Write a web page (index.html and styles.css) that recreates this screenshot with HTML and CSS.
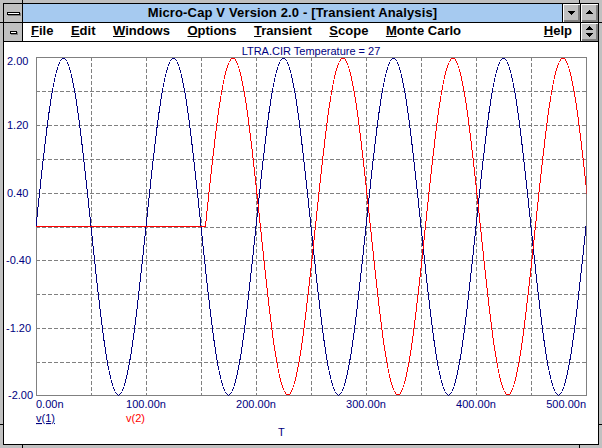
FILE: index.html
```html
<!DOCTYPE html>
<html>
<head>
<meta charset="utf-8">
<title>Micro-Cap V</title>
<link rel="stylesheet" href="styles.css">
</head>
<body>
<div class="window">
  <div class="inner">
    <div class="titlebar">
      <div class="sysbox"><span class="sysbar"></span></div>
      <div class="caption">Micro-Cap V Version 2.0 - [Transient Analysis]</div>
      <div class="btn btn-min"><svg width="7" height="4" viewBox="0 0 7 4"><path d="M0 0H7V1H6V2H5V3H4V4H3V3H2V2H1V1H0Z"/></svg></div>
      <div class="btn btn-max"><svg width="7" height="4" viewBox="0 0 7 4"><path d="M3 0H4V1H5V2H6V3H7V4H0V3H1V2H2V1H3Z"/></svg></div>
    </div>
    <div class="menubar">
      <div class="sysbox"><span class="sysbar sysbar-small"></span></div>
      <ul class="menu">
        <li><u>F</u>ile</li>
        <li><u>E</u>dit</li>
        <li><u>W</u>indows</li>
        <li><u>O</u>ptions</li>
        <li><u>T</u>ransient</li>
        <li><u>S</u>cope</li>
        <li><u>M</u>onte Carlo</li>
        <li class="menu-help"><u>H</u>elp</li>
      </ul>
      <div class="btn btn-max btn-restore"><svg width="7" height="11" viewBox="0 0 7 11"><path d="M3 0H4V1H5V2H6V3H7V4H0V3H1V2H2V1H3Z M0 7H7V8H6V9H5V10H4V11H3V10H2V9H1V8H0Z"/></svg></div>
    </div>
    <div class="client">
      <svg class="chart" width="594" height="402" viewBox="4 42 594 402">
        <defs>
          <clipPath id="plot-clip"><rect x="36" y="40" width="550.5" height="380"/></clipPath>
        </defs>
        <text class="label" x="311" y="55" text-anchor="middle">LTRA.CIR Temperature = 27</text>
        <path class="grid" d="M91.5 57V396M146.5 57V396M201.5 57V396M256.5 57V396M311.5 57V396M366.5 57V396M421.5 57V396M476.5 57V396M531.5 57V396"/>
        <path class="grid" d="M36 91.5H586M36 125.5H586M36 159.5H586M36 193.5H586M36 227.5H586M36 260.5H586M36 294.5H586M36 328.5H586M36 362.5H586"/>
        <rect class="frame" x="36.5" y="57.5" width="550" height="338"/>
        <text class="label" x="7" y="65">2.00</text>
        <text class="label" x="7" y="129">1.20</text>
        <text class="label" x="7" y="197">0.40</text>
        <text class="label" x="6" y="264">-0.40</text>
        <text class="label" x="6" y="332">-1.20</text>
        <text class="label" x="8" y="399">-2.00</text>
        <text class="label" x="36" y="408">0.00n</text>
        <text class="label" x="146" y="408" text-anchor="middle">100.00n</text>
        <text class="label" x="256" y="408" text-anchor="middle">200.00n</text>
        <text class="label" x="366" y="408" text-anchor="middle">300.00n</text>
        <text class="label" x="476" y="408" text-anchor="middle">400.00n</text>
        <text class="label" x="586" y="408" text-anchor="end">500.00n</text>
        <g clip-path="url(#plot-clip)">
          <path class="wave wave-v1" d="M36 226.5c8.97-86.32 17.55-168.5 27.5-168.5c9.95 0 18.53 82.18 27.5 168.5c8.97 86.32 17.55 168.5 27.5 168.5c9.95 0 18.53-82.18 27.5-168.5c8.97-86.32 17.55-168.5 27.5-168.5c9.95 0 18.53 82.18 27.5 168.5c8.97 86.32 17.55 168.5 27.5 168.5c9.95 0 18.53-82.18 27.5-168.5c8.97-86.32 17.55-168.5 27.5-168.5c9.95 0 18.53 82.18 27.5 168.5c8.97 86.32 17.55 168.5 27.5 168.5c9.95 0 18.53-82.18 27.5-168.5c8.97-86.32 17.55-168.5 27.5-168.5c9.95 0 18.53 82.18 27.5 168.5c8.97 86.32 17.55 168.5 27.5 168.5c9.95 0 18.53-82.18 27.5-168.5c8.97-86.32 17.55-168.5 27.5-168.5c9.95 0 18.53 82.18 27.5 168.5c8.97 86.32 17.55 168.5 27.5 168.5c9.95 0 18.53-82.18 27.5-168.5"/>
          <path class="wave wave-v2" d="M36 226.5H205.4c8.97-86.32 17.55-168.5 27.5-168.5c9.95 0 18.53 82.18 27.5 168.5c8.97 86.32 17.55 168.5 27.5 168.5c9.95 0 18.53-82.18 27.5-168.5c8.97-86.32 17.55-168.5 27.5-168.5c9.95 0 18.53 82.18 27.5 168.5c8.97 86.32 17.55 168.5 27.5 168.5c9.95 0 18.53-82.18 27.5-168.5c8.97-86.32 17.55-168.5 27.5-168.5c9.95 0 18.53 82.18 27.5 168.5c8.97 86.32 17.55 168.5 27.5 168.5c9.95 0 18.53-82.18 27.5-168.5c8.97-86.32 17.55-168.5 27.5-168.5c9.95 0 18.53 82.18 27.5 168.5c8.97 86.32 17.55 168.5 27.5 168.5c9.95 0 18.53-82.18 27.5-168.5"/>
        </g>
        <text class="label legend-v1" x="36" y="422">v(1)</text>
        <text class="label label-red" x="126" y="422">v(2)</text>
        <text class="label" x="278" y="436">T</text>
      </svg>
    </div>
  </div>
</div>
</body>
</html>
```

FILE: styles.css
```css
html, body {
  margin: 0;
  padding: 0;
}

body {
  width: 602px;
  height: 448px;
  overflow: hidden;
  background: #c0c0c0;
  font-family: "Liberation Sans", Arial, sans-serif;
}

.window {
  box-sizing: border-box;
  width: 602px;
  height: 448px;
  padding: 3px;
  display: flex;
  background:
    linear-gradient(#000, #000) 22px 0 / 1px 100% no-repeat,
    linear-gradient(#000, #000) 579px 0 / 1px 100% no-repeat,
    linear-gradient(#000, #000) 0 22px / 100% 1px no-repeat,
    linear-gradient(#000, #000) 0 424px / 100% 1px no-repeat,
    #c0c0c0;
}

.inner {
  flex: 1;
  display: flex;
  flex-direction: column;
  border: 1px solid #000;
  min-width: 0;
}

.titlebar,
.menubar {
  display: flex;
  height: 18px;
  border-bottom: 1px solid #000;
}

.sysbox {
  width: 18px;
  flex: none;
  border-right: 1px solid #000;
  background: #c0c0c0;
  display: flex;
  align-items: center;
  justify-content: center;
}

.sysbar {
  display: block;
  width: 11px;
  height: 1px;
  background: #fff;
  border: 1px solid #000;
  box-shadow: 1px 1px 0 #808080;
}

.sysbar-small {
  width: 5px;
}

.caption {
  flex: 1;
  background: #a6caf0;
  color: #000;
  text-align: center;
  font-weight: bold;
  font-size: 13px;
  line-height: 18px;
  letter-spacing: 0.15px;
  white-space: nowrap;
  overflow: hidden;
}

.btn {
  flex: none;
  width: 17px;
  border-left: 1px solid #000;
  background: #c0c0c0;
  box-shadow: inset 1px 1px 0 #fff, inset -2px -2px 0 #808080;
  display: flex;
  align-items: center;
  justify-content: center;
}

.btn svg {
  display: block;
  fill: #000;
}

.btn-max {
  width: 18px;
  padding-bottom: 2px;
  box-sizing: border-box;
}

.btn-min {
  width: 17px;
}

.btn-max.btn-restore {
  padding-bottom: 1px;
}

.menu {
  flex: 1;
  display: flex;
  gap: 1.5px;
  margin: 0;
  padding: 0;
  list-style: none;
  background: #fff;
}

.menu li {
  padding: 0 8px;
  font-weight: bold;
  font-size: 13px;
  line-height: 15px;
  color: #000;
  white-space: nowrap;
}

.menu u {
  text-decoration-thickness: 1px;
  text-underline-offset: 1px;
}

.menu .menu-help {
  margin-left: auto;
}

.client {
  flex: 1;
  background: #fff;
  overflow: hidden;
}

.chart {
  display: block;
}

.grid {
  fill: none;
  stroke: #808080;
  stroke-width: 1;
  stroke-dasharray: 4 2;
  shape-rendering: crispEdges;
}

.frame {
  fill: none;
  stroke: #808080;
  stroke-width: 1;
  shape-rendering: crispEdges;
}

.wave {
  fill: none;
  stroke-width: 1;
  shape-rendering: crispEdges;
}

.wave-v1 {
  stroke: #000080;
}

.wave-v2 {
  stroke: #ff0000;
}

.label {
  font-family: "Liberation Sans", Arial, sans-serif;
  font-size: 11px;
  fill: #000080;
}

.label-red {
  fill: #ff0000;
}

.legend-v1 {
  text-decoration: underline;
}
```
